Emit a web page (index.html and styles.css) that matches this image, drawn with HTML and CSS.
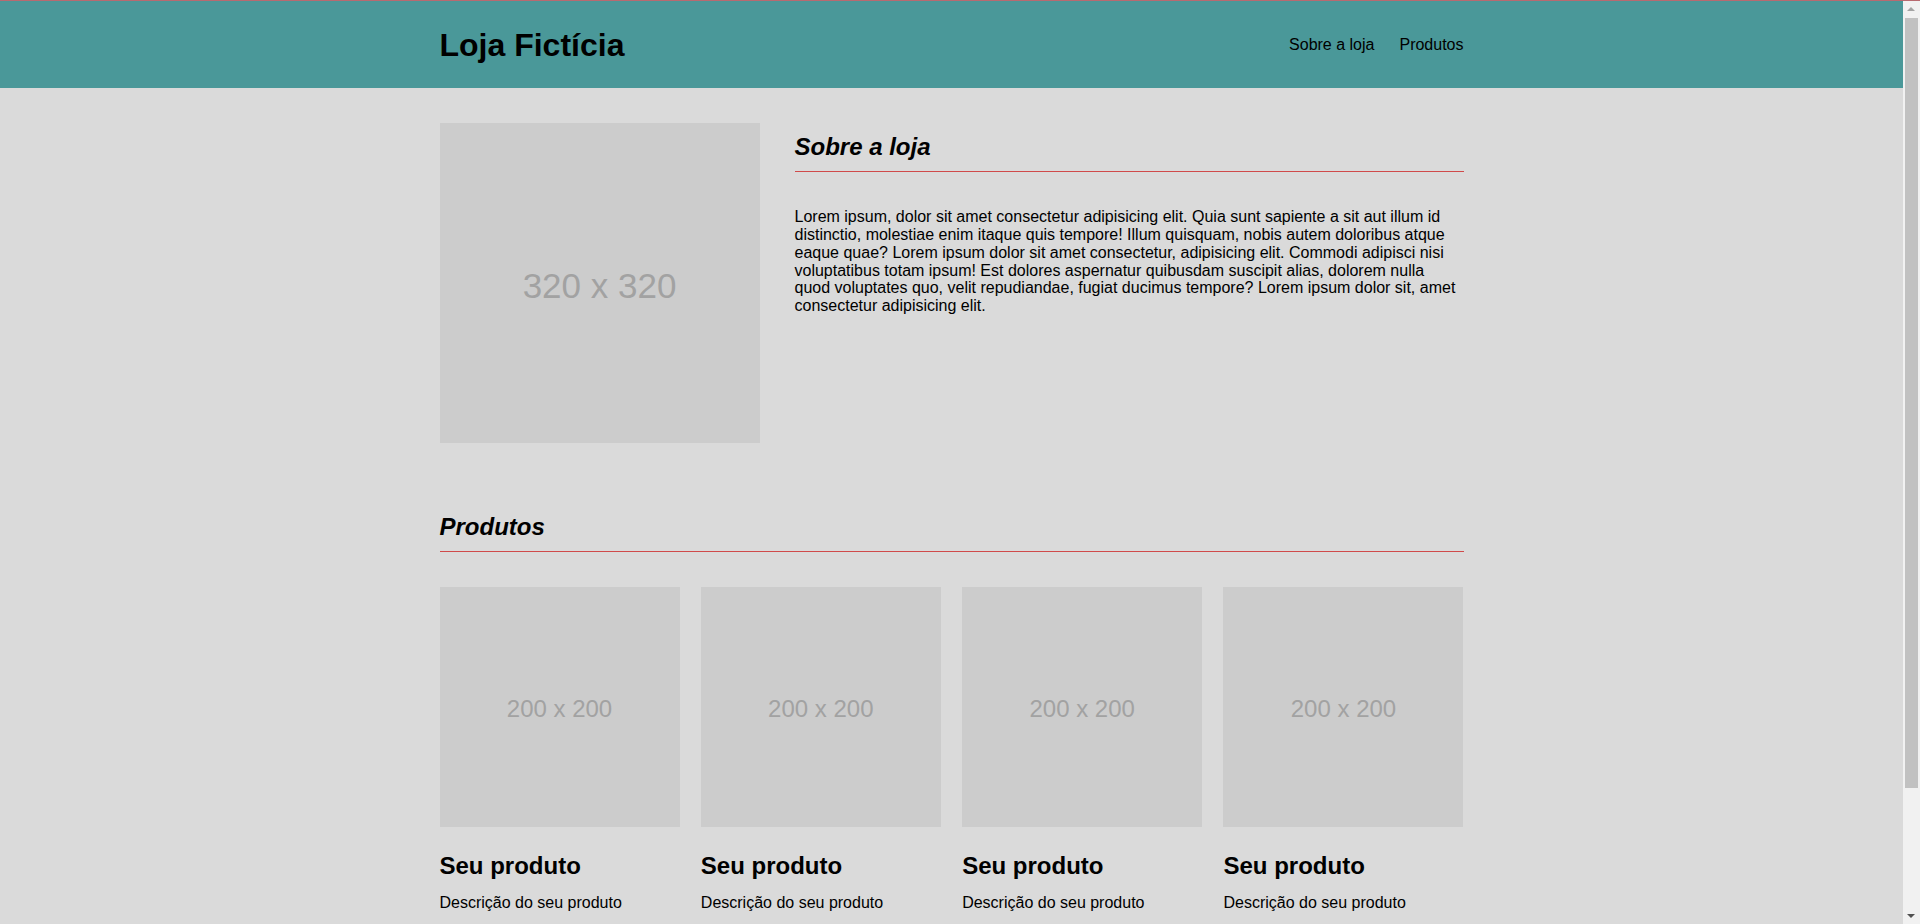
FILE: index.html
```html
<!DOCTYPE html>
<html lang="pt-BR">
<head>
<meta charset="utf-8">
<title>Loja Fictícia</title>
<link rel="stylesheet" href="styles.css">
</head>
<body>
<header class="topbar">
  <div class="container topbar-inner">
    <h1 class="brand">Loja Fictícia</h1>
    <nav class="nav">
      <a href="#sobre">Sobre a loja</a>
      <a href="#produtos">Produtos</a>
    </nav>
  </div>
</header>
<main class="container">
  <section class="about" id="sobre">
    <div class="ph ph-large">320 x 320</div>
    <div class="about-text">
      <h2 class="section-title">Sobre a loja</h2>
      <p class="about-p">Lorem ipsum, dolor sit amet consectetur adipisicing elit. Quia sunt sapiente a sit aut illum id distinctio, molestiae enim itaque quis tempore! Illum quisquam, nobis autem doloribus atque eaque quae? Lorem ipsum dolor sit amet consectetur, adipisicing elit. Commodi adipisci nisi voluptatibus totam ipsum! Est dolores aspernatur quibusdam suscipit alias, dolorem nulla quod voluptates quo, velit repudiandae, fugiat ducimus tempore? Lorem ipsum dolor sit, amet consectetur adipisicing elit.</p>
    </div>
  </section>
  <section class="products" id="produtos">
    <h2 class="section-title">Produtos</h2>
    <div class="product-list">
      <article class="product">
        <div class="ph ph-small">200 x 200</div>
        <h3 class="product-name">Seu produto</h3>
        <p class="product-desc">Descrição do seu produto</p>
      </article>
      <article class="product">
        <div class="ph ph-small">200 x 200</div>
        <h3 class="product-name">Seu produto</h3>
        <p class="product-desc">Descrição do seu produto</p>
      </article>
      <article class="product">
        <div class="ph ph-small">200 x 200</div>
        <h3 class="product-name">Seu produto</h3>
        <p class="product-desc">Descrição do seu produto</p>
      </article>
      <article class="product">
        <div class="ph ph-small">200 x 200</div>
        <h3 class="product-name">Seu produto</h3>
        <p class="product-desc">Descrição do seu produto</p>
      </article>
    </div>
  </section>
</main>
<div class="fake-scrollbar" aria-hidden="true">
  <span class="sb-arrow sb-up"></span>
  <span class="sb-thumb"></span>
  <span class="sb-arrow sb-down"></span>
</div>
</body>
</html>
```

FILE: styles.css
```css
body {
  margin: 0;
  padding-right: 17px;
  background: #dadada;
  font-family: "Liberation Sans", Arial, sans-serif;
  font-size: 16px;
  line-height: 1.117;
  color: #000;
}
.container {
  width: 1024px;
  margin: 0 auto;
}
.topbar {
  background: #4a9899;
  border-top: 1px solid #b86a70;
  height: 88px;
  box-sizing: border-box;
}
.topbar-inner {
  height: 100%;
  display: flex;
  align-items: center;
  justify-content: space-between;
}
.brand {
  margin: 0;
  font-size: 32px;
  font-weight: bold;
  line-height: 36px;
}
.nav {
  display: flex;
  gap: 25px;
}
.nav a {
  color: #000;
  text-decoration: none;
  font-size: 16px;
}
.ph {
  background: #cccccc;
  color: #a2a2a2;
  display: flex;
  align-items: center;
  justify-content: center;
  flex-shrink: 0;
  box-sizing: border-box;
}
.ph-large {
  width: 320px;
  height: 320px;
  font-size: 35px;
  padding-top: 6px;
}
.ph-small {
  width: 240px;
  height: 240px;
  font-size: 24px;
  padding-top: 4px;
}
.about {
  display: flex;
  gap: 35px;
  padding-top: 35px;
}
.about-text {
  flex: 1;
  padding-top: 10px;
}
.section-title {
  margin: 0;
  font-size: 24px;
  font-style: italic;
  font-weight: bold;
  line-height: 27px;
  padding-bottom: 11px;
  border-bottom: 1px solid #d04a4a;
}
.about-p {
  margin: 36px 0 0;
}
.products {
  margin-top: 70px;
  padding-bottom: 60px;
}
.product-list {
  display: flex;
  justify-content: space-between;
  margin-top: 35px;
}
.product {
  width: 240px;
}
.product-name {
  margin: 25px 0 0;
  font-size: 24px;
  font-weight: bold;
  line-height: 27px;
}
.product-desc {
  margin: 15px 0 0;
}
.fake-scrollbar {
  position: fixed;
  top: 0;
  right: 0;
  bottom: 0;
  width: 17px;
  background: #f1f1f1;
  border-top: 1px solid #b86a70;
  box-sizing: border-box;
}
.sb-thumb {
  position: absolute;
  top: 17px;
  left: 2px;
  width: 13px;
  height: 770px;
  background: #c1c1c1;
}
.sb-arrow {
  position: absolute;
  left: 4px;
  width: 0;
  height: 0;
  border-left: 4px solid transparent;
  border-right: 4px solid transparent;
}
.sb-up {
  top: 6px;
  border-bottom: 4px solid #a3a3a3;
}
.sb-down {
  bottom: 6px;
  border-top: 4px solid #505050;
}
```
